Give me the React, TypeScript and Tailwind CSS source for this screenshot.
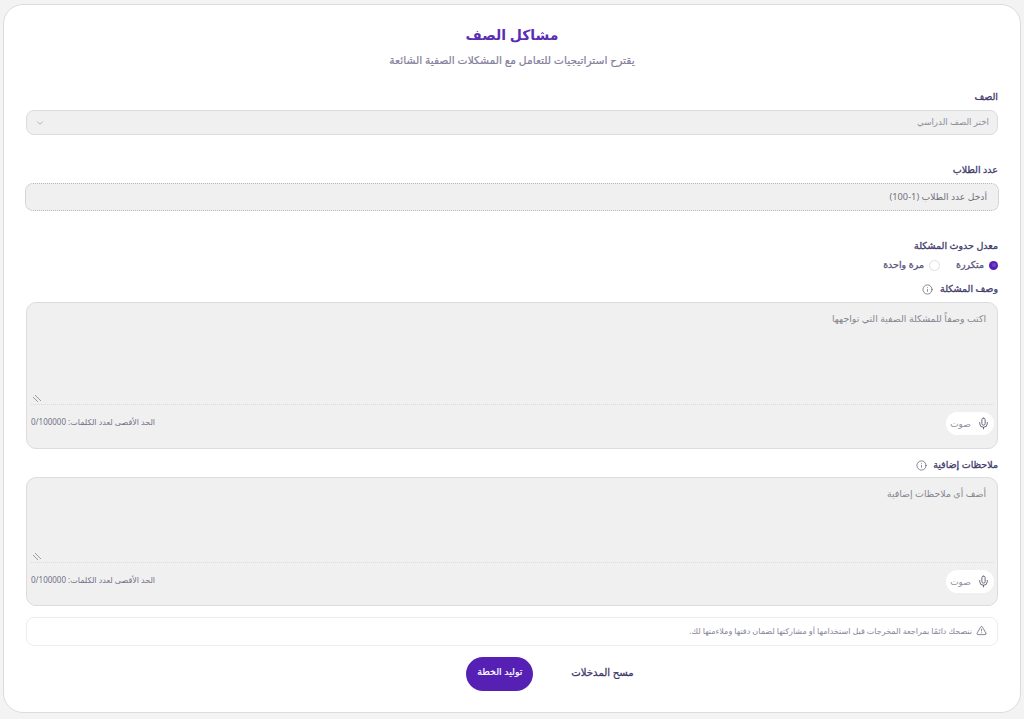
import { ChevronDown, Info, Mic, TriangleAlert } from 'lucide-react';

function VoiceButton() {
  return (
    <button className="flex h-[23px] w-[48px] items-center justify-center gap-[6px] rounded-full bg-white text-[9px] text-[#8f8f9c]">
      <Mic size={13} strokeWidth={1.6} className="text-[#55556a]" />
      <span>صوت</span>
    </button>
  );
}

function TextBox({
  placeholder,
  areaHeight,
  boxHeight,
}: {
  placeholder: string;
  areaHeight: string;
  boxHeight: string;
}) {
  return (
    <div className={`mx-[1px] flex flex-col rounded-[10px] border border-[#dcdcdc] bg-[#f0f0f0] pl-[4px] pr-[3px] ${boxHeight}`}>
      <div className={`relative border-b border-dotted border-[#dadada] pl-[9px] pr-[8px] pt-[8px] text-[9.4px] leading-[16px] text-[#85858f] ${areaHeight}`}>
        {placeholder}
        <svg width="9" height="9" viewBox="0 0 9 9" className="absolute bottom-[1px] left-[1px] text-[#777]">
          <path d="M1 3l5 5M3 1l6 6" stroke="currentColor" strokeWidth="0.7" fill="none" />
        </svg>
      </div>
      <div className="flex flex-1 items-start justify-between pt-[7px]">
        <VoiceButton />
        <span className="mt-[4px] text-[8px] text-[#70708a]">الحد الأقصى لعدد الكلمات: 0/100000</span>
      </div>
    </div>
  );
}

export default function App() {
  return (
    <div className="h-[719px] w-[1024px] overflow-hidden bg-[#f3f3f3] pl-[3px] pr-[3px] pt-[4px] font-['Noto_Sans','DejaVu_Sans',sans-serif]" dir="rtl">
      <div className="h-[709px] rounded-[20px] border border-[#dcdcdc] bg-white px-[21px] pt-[18px]">
        <div className="text-center">
          <h1 className="text-[14px] font-bold leading-[24px] text-[#5a2db4]">مشاكل الصف</h1>
          <p className="mt-[1px] text-[10.7px] leading-[24px] text-[#85809c] [-webkit-text-stroke:0.2px_#85809c]">يقترح استراتيجيات للتعامل مع المشكلات الصفية الشائعة</p>
        </div>

        <label className="mt-[18px] mr-[1px] block text-[9.5px] leading-[14px] text-[#3f3a6b] [-webkit-text-stroke:0.3px_#3f3a6b]">الصف</label>
        <div className="mx-[1px] mt-[6px] flex h-[25px] items-center justify-between rounded-[8px] border border-[#dcdcdc] bg-[#f0f0f0] px-[8px] text-[8.7px] text-[#8e8e98]">
          <span>اختر الصف الدراسي</span>
          <ChevronDown size={10} className="text-[#a9a9b5]" />
        </div>

        <label className="mt-[28px] mr-[1px] block text-[9.5px] leading-[14px] text-[#3f3a6b] [-webkit-text-stroke:0.3px_#3f3a6b]">عدد الطلاب</label>
        <div className="mt-[6px] flex h-[28px] items-center rounded-[8px] border border-dotted border-[#b9b9c2] bg-[#f0f0f0] px-[11px] text-[9.2px] text-[#70707c]">
          أدخل عدد الطلاب (1-100)
        </div>

        <label className="mt-[28px] mr-[1px] block text-[9.5px] leading-[14px] text-[#3f3a6b] [-webkit-text-stroke:0.3px_#3f3a6b]">معدل حدوث المشكلة</label>
        <div className="mr-[1px] mt-[5px] flex h-[14px] items-center text-[9.5px] text-[#5a5480] [-webkit-text-stroke:0.3px_#5a5480]">
          <span className="flex h-[9px] w-[9px] items-center justify-center rounded-full bg-[#5620b4]">
            <span className="h-[4px] w-[4px] rounded-full bg-[#6f45c4]" />
          </span>
          <span className="mr-[5px]">متكررة</span>
          <span className="mr-[16px] h-[11px] w-[11px] rounded-full border border-[#dedede] bg-white" />
          <span className="mr-[5px]">مرة واحدة</span>
        </div>

        <div className="mr-[1px] mt-[10px] flex h-[14px] items-center gap-[7px] text-[9.5px] text-[#3f3a6b]">
          <span className="[-webkit-text-stroke:0.3px_#3f3a6b]">وصف المشكلة</span>
          <Info size={11} strokeWidth={1.5} className="text-[#55556a]" />
        </div>
        <div className="mt-[6px]">
          <TextBox placeholder="اكتب وصفاً للمشكلة الصفية التي تواجهها" areaHeight="h-[102px]" boxHeight="h-[147px]" />
        </div>

        <div className="mr-[1px] mt-[9px] flex h-[14px] items-center gap-[6px] text-[9.5px] text-[#3f3a6b]">
          <span className="[-webkit-text-stroke:0.3px_#3f3a6b]">ملاحظات إضافية</span>
          <Info size={11} strokeWidth={1.5} className="text-[#55556a]" />
        </div>
        <div className="mt-[5px]">
          <TextBox placeholder="أضف أي ملاحظات إضافية" areaHeight="h-[85px]" boxHeight="h-[129px]" />
        </div>

        <div className="mx-[1px] mt-[11px] flex h-[29px] items-center gap-[4px] rounded-[8px] border border-[#ececec] px-[10px] pb-[2px] text-[8px] text-[#85859a]">
          <TriangleAlert size={11} strokeWidth={1.5} className="text-[#55556a]" />
          <span>ننصحك دائمًا بمراجعة المخرجات قبل استخدامها أو مشاركتها لضمان دقتها وملاءمتها لك.</span>
        </div>

        <div className="mt-[11px] flex items-center justify-center gap-[38px] pl-[76px]">
          <button className="pb-[3px] text-[10.1px] text-[#3f3a6b] [-webkit-text-stroke:0.3px_#3f3a6b]">مسح المدخلات</button>
          <button className="h-[34px] w-[67px] rounded-full bg-[#5620b4] pb-[3px] text-[9.5px] text-white [-webkit-text-stroke:0.2px_#ffffff]">توليد الخطة</button>
        </div>
      </div>
    </div>
  );
}
